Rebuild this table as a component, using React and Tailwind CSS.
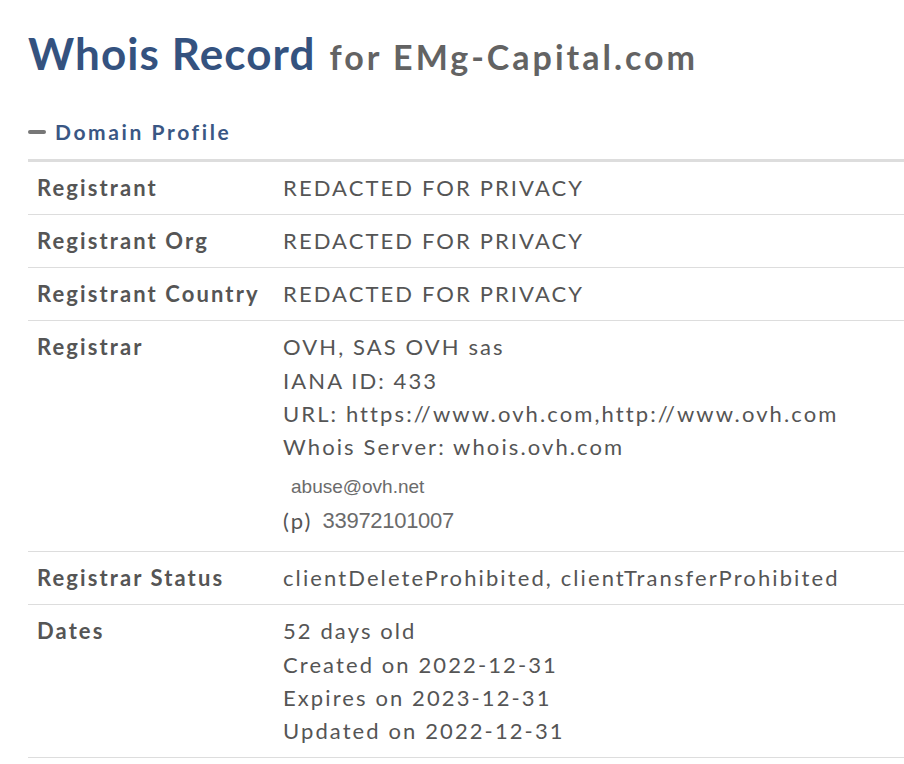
export default function App() {
  const rows = [
    { label: 'Registrant', lines: ['REDACTED FOR PRIVACY'] },
    { label: 'Registrant Org', lines: ['REDACTED FOR PRIVACY'] },
    { label: 'Registrant Country', lines: ['REDACTED FOR PRIVACY'] },
    { label: 'Registrar', registrar: true },
    { label: 'Registrar Status', lines: ['clientDeleteProhibited, clientTransferProhibited'] },
    {
      label: 'Dates',
      lines: ['52 days old', 'Created on 2022-12-31', 'Expires on 2023-12-31', 'Updated on 2022-12-31'],
    },
  ];

  return (
    <div className="min-h-screen bg-white pl-[28px] pt-[25px] text-[#555]" style={{ fontFamily: 'Lato, "Open Sans", sans-serif' }}>
      <h1 className="leading-[56px] whitespace-nowrap">
        <span className="text-[44px] font-bold text-[#34527f] tracking-[1.1px]">Whois Record</span>
        <span className="ml-[14px] text-[34px] font-bold text-[#636363] tracking-[3px]">for EMg-Capital.com</span>
      </h1>

      <div className="mt-[28px] flex items-center gap-[9px] h-[24px]">
        <span className="block w-[18px] h-[4px] rounded-[2px] bg-[#777]" />
        <span className="text-[21px] font-bold text-[#3a5784] tracking-[2.6px]">Domain Profile</span>
      </div>

      <div className="mt-[15px] border-t-[3px] border-[#ddd]">
        {rows.map((row) => (
          <div key={row.label} className="flex border-b border-[#ddd] py-[9.33px] text-[22px] leading-[33.33px] tracking-[2.1px]">
            <div className="w-[255px] shrink-0 pl-[9px] font-bold">{row.label}</div>
            <div className="flex-1 whitespace-nowrap">
              {row.registrar ? (
                <>
                  <div>OVH, SAS OVH sas</div>
                  <div>IANA ID: 433</div>
                  <div>URL: https://www.ovh.com,http://www.ovh.com</div>
                  <div>Whois Server: whois.ovh.com</div>
                  <div className="pt-[6px] pl-[8px] text-[19px] leading-[34px] tracking-normal text-[#6b6b6b]" style={{ fontFamily: '"Liberation Sans", Arial, sans-serif' }}>
                    abuse@ovh.net
                  </div>
                  <div className="flex items-center mb-[4px] h-[34px]">
                    <span>(p)</span>
                    <span className="ml-[10px] text-[22px] tracking-[-0.3px] text-[#6b6b6b]" style={{ fontFamily: '"Liberation Sans", Arial, sans-serif' }}>
                      33972101007
                    </span>
                  </div>
                </>
              ) : (
                row.lines.map((l) => <div key={l}>{l}</div>)
              )}
            </div>
          </div>
        ))}
      </div>
    </div>
  );
}
